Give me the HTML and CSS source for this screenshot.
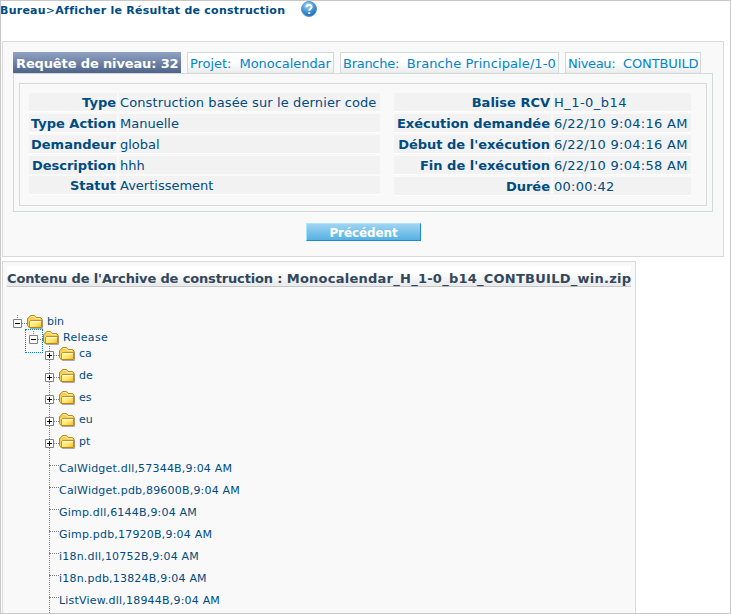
FILE: index.html
```
<!DOCTYPE html>
<html lang="fr">
<head>
<meta charset="utf-8">
<title>Afficher le Résultat de construction</title>
<link rel="stylesheet" href="styles.css">
</head>
<body>
<svg class="defs" width="0" height="0" aria-hidden="true">
  <defs>
    <linearGradient id="gold" x1="0" y1="0" x2="1" y2="1"><stop offset="0" stop-color="#fffdb0"/><stop offset=".5" stop-color="#ffe978"/><stop offset="1" stop-color="#f3b928"/></linearGradient>
    <radialGradient id="blue" cx=".4" cy=".25" r=".8"><stop offset="0" stop-color="#a9d6f3"/><stop offset=".5" stop-color="#4b9bdb"/><stop offset="1" stop-color="#1763b0"/></radialGradient>
    <symbol id="folder" viewBox="0 0 17 14">
      <path d="M3 13.500h12.500V5" fill="none" stroke="#aaa"/>
      <path d="M.5 10.500V3.500L2 2.500 3.500.500h4L9 2.500h4.500L15 4v8l-1 .500H2z" fill="#f5cf58" stroke="#bd8420"/>
      <path d="M4 1.500h3l1.500 2H13" fill="none" stroke="#fff0a0"/>
      <path d="M3.500 5.500h11v6l-.5 1H3L2.500 12V6.500z" fill="url(#gold)" stroke="#b57a12" stroke-width=".8"/>
      <path d="M4 6.500h10" stroke="#fffbd0"/>
    </symbol>
    <symbol id="minus" viewBox="0 0 9 9"><path d="M.5.500h8v8h-8z" fill="#fff" stroke="#808080"/><path d="M2 4.500h5" stroke="#000"/></symbol>
    <symbol id="plus" viewBox="0 0 9 9"><path d="M.5.500h8v8h-8z" fill="#fff" stroke="#808080"/><path d="M2 4.500h5M4.500 2v5" stroke="#000"/></symbol>
  </defs>
</svg>
<main class="page">
  <header class="crumbs">
    <span class="crumb-text">Bureau<b class="sep">&gt;</b>Afficher le Résultat de construction</span>
    <svg class="help" viewBox="0 0 16 16"><circle cx="8" cy="8" r="7.500" fill="url(#blue)" stroke="#5798cf"/><path d="M5.500 6.200C5.500 2.900 10.700 3 10.600 6 10.600 7.900 8.200 7.800 8.200 9.800M8.200 11.200v1.800" fill="none" stroke="#fff" stroke-width="2"/></svg>
  </header>

  <section class="panel summary">
    <nav class="tabs">
      <span class="tab active">Requête de niveau: 32</span>
      <span class="tab project">Projet:&nbsp; Monocalendar</span>
      <span class="tab branch"><span class="key">Branche:&nbsp; </span>Branche Principale/1-0</span>
      <span class="tab level"><span class="key">Niveau:&nbsp; </span>CONTBUILD</span>
    </nav>
    <div class="frame">
      <div class="details">
        <dl class="facts left">
          <dt>Type</dt><dd class="long">Construction basée sur le dernier code</dd>
          <dt>Type Action</dt><dd>Manuelle</dd>
          <dt>Demandeur</dt><dd>global</dd>
          <dt class="tight">Description</dt><dd class="tight">hhh</dd>
          <dt>Statut</dt><dd>Avertissement</dd>
        </dl>
        <dl class="facts right">
          <dt>Balise RCV</dt><dd class="tag">H_1-0_b14</dd>
          <dt>Exécution demandée</dt><dd>6/22/10 9:04:16 AM</dd>
          <dt>Début de l'exécution</dt><dd>6/22/10 9:04:16 AM</dd>
          <dt>Fin de l'exécution</dt><dd>6/22/10 9:04:58 AM</dd>
          <dt>Durée</dt><dd>00:00:42</dd>
        </dl>
      </div>
    </div>
    <button class="back" type="button">Précédent</button>
  </section>

  <section class="panel archive">
    <h2 class="title"><span class="caption">Contenu de l'Archive de construction : </span><span class="zip">Monocalendar_H_1-0_b14_CONTBUILD_win.zip</span></h2>
    <div class="tree">
      <div class="node root"><svg class="toggle"><use href="#minus"/></svg><i class="link"></i><svg class="folder"><use href="#folder"/></svg><span>bin</span></div>
      <div class="node release"><svg class="toggle"><use href="#minus"/></svg><i class="link"></i><svg class="folder"><use href="#folder"/></svg><span>Release</span></div>
      <div class="children">
        <div class="node"><svg class="toggle"><use href="#plus"/></svg><i class="link"></i><svg class="folder"><use href="#folder"/></svg><span>ca</span></div>
        <div class="node"><svg class="toggle"><use href="#plus"/></svg><i class="link"></i><svg class="folder"><use href="#folder"/></svg><span>de</span></div>
        <div class="node"><svg class="toggle"><use href="#plus"/></svg><i class="link"></i><svg class="folder"><use href="#folder"/></svg><span>es</span></div>
        <div class="node"><svg class="toggle"><use href="#plus"/></svg><i class="link"></i><svg class="folder"><use href="#folder"/></svg><span>eu</span></div>
        <div class="node"><svg class="toggle"><use href="#plus"/></svg><i class="link"></i><svg class="folder"><use href="#folder"/></svg><span>pt</span></div>
        <div class="files">
          <div class="file"><i class="branch-line"></i><span>CalWidget.dll,57344B,9:04 AM</span></div>
          <div class="file"><i class="branch-line"></i><span>CalWidget.pdb,89600B,9:04 AM</span></div>
          <div class="file"><i class="branch-line"></i><span>Gimp.dll,6144B,9:04 AM</span></div>
          <div class="file"><i class="branch-line"></i><span>Gimp.pdb,17920B,9:04 AM</span></div>
          <div class="file"><i class="branch-line"></i><span>i18n.dll,10752B,9:04 AM</span></div>
          <div class="file"><i class="branch-line"></i><span>i18n.pdb,13824B,9:04 AM</span></div>
          <div class="file"><i class="branch-line"></i><span>ListView.dll,18944B,9:04 AM</span></div>
        </div>
      </div>
    </div>
  </section>
</main>
</body>
</html>
```
FILE: styles.css
```
*, *::before { box-sizing: border-box; }
body { margin: 0; background: #fff; color: #004b80; font: 13px/18px Verdana, "DejaVu Sans", sans-serif; }
.defs { position: absolute; }
.page { display: flex; flex-direction: column; width: 731px; height: 614px; border: 1px solid #c8c8c8; overflow: hidden; padding-left: 1px; }
.crumbs { display: flex; align-items: flex-start; flex: 0 0 40px; margin-left: -2px; font: bold 11px/19px Verdana, "DejaVu Sans", sans-serif; }
.crumb-text { width: 301px; white-space: nowrap; letter-spacing: .25px; }
.sep { font-weight: normal; }
.help { width: 16px; height: 16px; }
.panel { background: #f9f9f9; border: 1px solid #d9d9d9; }
.summary { flex: 0 0 216px; width: 722px; padding: 10px 10px 0; }
.tabs { display: flex; gap: 6px; height: 21px; }
.tab { height: 21px; border: 1px solid #d3d8d9; border-bottom: 0; padding-left: 2px; line-height: 22px; white-space: nowrap; color: #0084cb; background: linear-gradient(#fff 45%, #e9ebed); }
.active { width: 168px; border: 0; padding-left: 3px; letter-spacing: -.13px; line-height: 24px; color: #fff; font-weight: bold; background: linear-gradient(#91a3c4, #4f6388); }
.project { width: 147px; letter-spacing: -.05px; }
.branch { width: 219px; letter-spacing: .1px; }
.branch .key { letter-spacing: -.28px; }
.level { width: 136px; letter-spacing: -.1px; }
.level .key { letter-spacing: -.33px; }
.frame { width: 700px; height: 139px; border: 1px solid #d3d8d9; padding: 9px 5px 5px; }
.details { display: flex; align-items: flex-start; gap: 14px; height: 123px; border: 1px solid #d9d9d9; padding: 9px; }
.facts { display: grid; margin: 0; column-gap: 2px; line-height: 20px; }
.left { grid-template-columns: 88px 261px; }
.right { grid-template-columns: 157px 138px; }
.facts dt, .facts dd { height: 19px; margin: 0 0 2px; border-bottom: 1px solid #fff; background: #f2f2f2; white-space: nowrap; }
.facts dt { text-align: right; font-weight: bold; padding-right: 1px; }
.facts dd { padding-left: 1px; }
.facts .long { letter-spacing: .11px; }
.right dd { letter-spacing: .28px; }
.right .tag { letter-spacing: .45px; }
.facts .tight { height: 18px; border-bottom: 0; }
.back { display: block; width: 115px; height: 18px; margin: 11px 0 0 293px; padding: 1px 0 0; border: 1px solid; border-color: #a9e6fb #208bc9 #208bc9 #a9e6fb; background: linear-gradient(#9fd4f2, #58b1e2); color: #fff; font: bold 12px/16px Verdana, "DejaVu Sans", sans-serif; letter-spacing: -.1px; }
.archive { flex: 0 0 352px; width: 634px; margin-top: 4px; padding: 4px; }
.title { width: 624px; height: 21px; margin: 0; border-bottom: 1px solid #c6c8ca; background: linear-gradient(#fff 30%, #e7e9eb); color: #33475b; font: bold 13px/25px Verdana, "DejaVu Sans", sans-serif; white-space: nowrap; }
.caption { letter-spacing: -.15px; }
.zip { letter-spacing: .25px; }
.tree { padding: 27px 0 0 6px; font-size: 11px; }
.node { display: flex; align-items: flex-start; height: 22px; }
.root, .release { height: 16px; background: repeating-linear-gradient(#808080 0 1px, transparent 1px 2px) 4px 1px / 1px 4px no-repeat; }
.release { margin-left: 16px; position: relative; }
.release::before { content: ""; position: absolute; left: -4px; top: -1px; width: 18px; height: 24px; border: 1px dotted #0084cb; }
.toggle { width: 9px; height: 9px; margin-top: 5px; }
.link { width: 5px; margin-top: 9px; border-top: 1px dotted #808080; }
.folder { width: 17px; height: 14px; margin-top: 1px; }
.node span { margin-left: 3px; line-height: 16px; }
.release span { letter-spacing: .28px; }
.children { margin-left: 32px; background: repeating-linear-gradient(#808080 0 1px, transparent 1px 2px) 4px 0 / 1px 100% no-repeat; }
.files { padding: 5px 0 0 4px; }
.file { display: flex; height: 22px; letter-spacing: .2px; }
.branch-line { width: 10px; height: 1px; margin-top: 4px; border-top: 1px dotted #808080; }
.file span { line-height: 16px; }
```
